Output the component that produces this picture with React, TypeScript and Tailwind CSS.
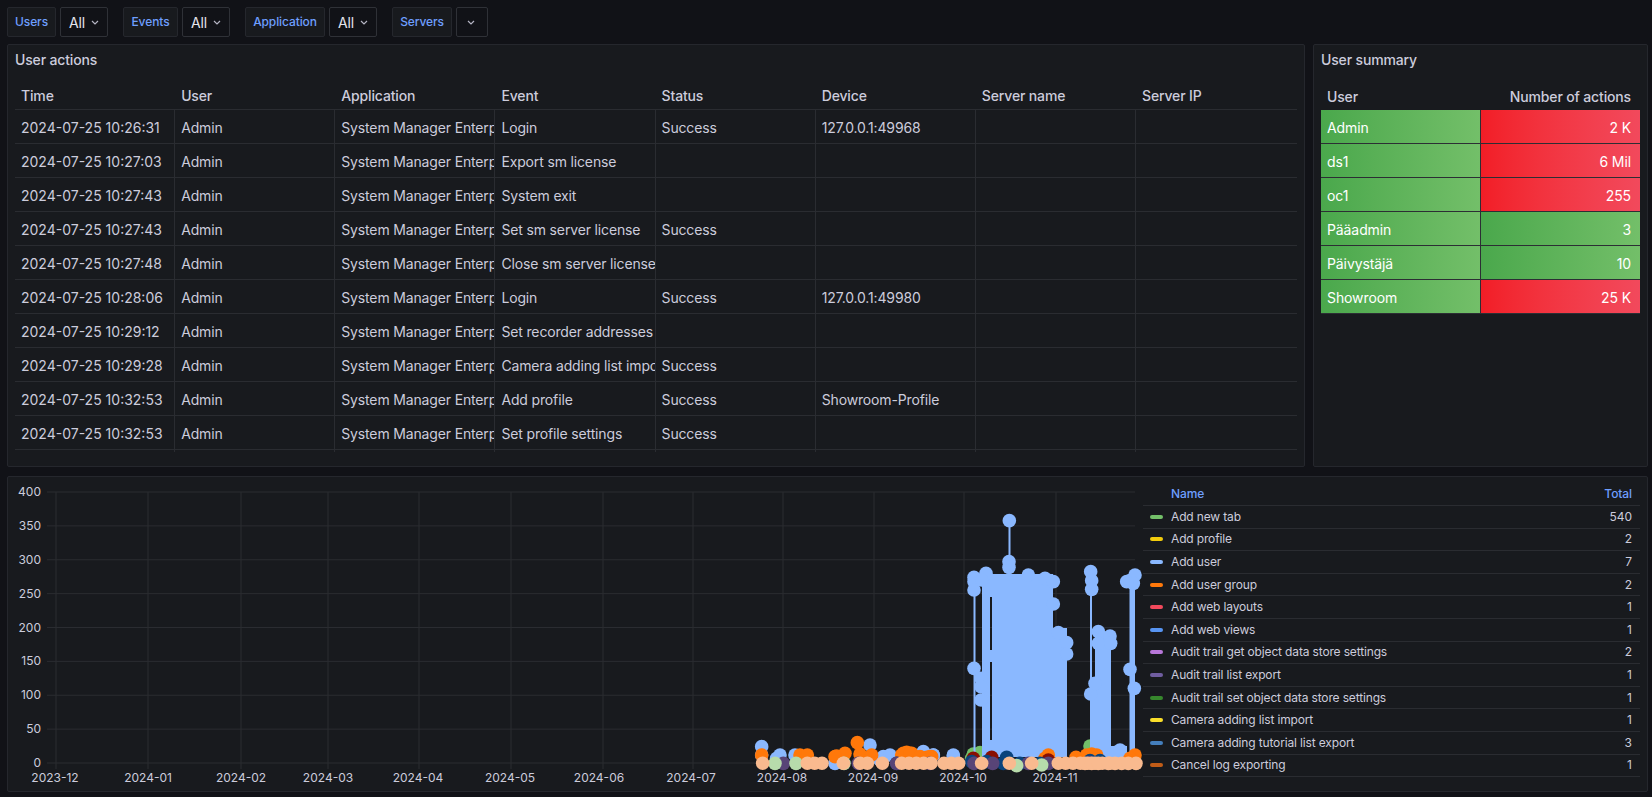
import React from "react";

const ROWS: string[][] = [
  ["2024-07-25 10:26:31", "Login", "Success", "127.0.0.1:49968"],
  ["2024-07-25 10:27:03", "Export sm license", "", ""],
  ["2024-07-25 10:27:43", "System exit", "", ""],
  ["2024-07-25 10:27:43", "Set sm server license", "Success", ""],
  ["2024-07-25 10:27:48", "Close sm server license", "", ""],
  ["2024-07-25 10:28:06", "Login", "Success", "127.0.0.1:49980"],
  ["2024-07-25 10:29:12", "Set recorder addresses", "", ""],
  ["2024-07-25 10:29:28", "Camera adding list import", "Success", ""],
  ["2024-07-25 10:32:53", "Add profile", "Success", "Showroom-Profile"],
  ["2024-07-25 10:32:53", "Set profile settings", "Success", ""],
];
const HEADERS = ["Time", "User", "Application", "Event", "Status", "Device", "Server name", "Server IP"];

const SUMMARY: [string, string, boolean][] = [
  ["Admin", "2 K", true],
  ["ds1", "6 Mil", true],
  ["oc1", "255", true],
  ["Pääadmin", "3", false],
  ["Päivystäjä", "10", false],
  ["Showroom", "25 K", true],
];

const LEGEND: [string, string, string][] = [
  ["Add new tab", "540", "#73BF69"],
  ["Add profile", "2", "#F2CC0C"],
  ["Add user", "7", "#8AB8FF"],
  ["Add user group", "2", "#FF780A"],
  ["Add web layouts", "1", "#F2495C"],
  ["Add web views", "1", "#5794F2"],
  ["Audit trail get object data store settings", "2", "#B877D9"],
  ["Audit trail list export", "1", "#705DA0"],
  ["Audit trail set object data store settings", "1", "#37872D"],
  ["Camera adding list import", "1", "#FADE2A"],
  ["Camera adding tutorial list export", "3", "#447EBC"],
  ["Cancel log exporting", "1", "#C15C17"],
];

const MONTHS: [string, number, number][] = [
  ["2023-12", 56, 55], ["2024-01", 148, 148], ["2024-02", 241, 241], ["2024-03", 328, 328], ["2024-04", 419, 418], ["2024-05", 511, 510],
  ["2024-06", 603, 599], ["2024-07", 693, 691], ["2024-08", 783, 782], ["2024-09", 874, 873], ["2024-10", 964, 963], ["2024-11", 1056, 1055],
];

// zoom-space helpers: points read from enlarged crops of the chart
const z4 = (p: number[][]) => p.map(([x, y]) => [900 + x / 3, 490 + y / 3]);
const z5 = (p: number[][]) => p.map(([x, y]) => [720 + x / 3, 700 + y / 3]);

const BLUE = [
  ...z4([[328,92],[327,215],[327,232],[222,262],[222,275],[222,300],[258,250],[245,270],[385,255],[435,265],[460,275],[460,342],[475,428],[500,458],[500,492],[222,535],[243,565],[243,590],[243,630],[572,245],[575,272],[575,298],[595,425],[595,460],[630,438],[632,460],[572,612],[585,580],[690,272],[705,255],[700,280],[680,275],[690,538],[703,595],[660,780],[640,790],[160,795],[100,795],[70,788]]),
  ...z5([[125,140],[125,165],[180,165],[170,175],[225,165],[345,190],[450,135],[490,170],[510,165],[480,180],[610,155],[640,165],[700,168],[600,170],[550,165],[360,175]]),
];
const ORANGE = [
  ...z5([[125,165],[240,165],[262,165],[350,168],[375,160],[345,170],[412,128],[420,162],[455,165],[560,157],[575,160],[545,165],[635,170],[620,172],[985,165],[975,175],[1068,172],[1100,165],[1130,165],[1115,162]]),
  ...z4([[10,790],[30,790],[90,800],[60,800],[705,795],[690,805]]),
];
const GREEN = [...z5([[760,162],[780,158],[1110,138]]), ...z4([[215,805]])];
const DARKRED = z5([[760,175],[815,172],[985,180]]);
const DARKBLUE = z5([[530,190],[860,172],[755,185],[800,185],[850,190],[960,190],[900,190],[1110,182],[1140,182]]);
const PURPLE = z5([[190,190],[630,190],[415,190],[762,190],[818,190],[985,190],[925,190],[530,190],[1110,188]]);
const LIGHTGREEN = z5([[165,190],[228,190],[890,197],[965,195],[372,190]]);

const CLUSTERS = [[128,128],[262,308],[370,372],[420,450],[487,487],[545,635],[672,725],[785,790],[868,872],[935,935],[1015,1185]];
const PEACH: number[][] = [];
CLUSTERS.forEach(([a, b]) => {
  for (let x = a; x <= b; x += 22) PEACH.push([720 + x / 3, 763.3]);
});
const PEACH2 = z4([[555,820],[575,820],[595,820],[625,820],[645,820],[665,820],[685,820],[708,820]]);

function Dots({ pts, color }: { pts: number[][]; color: string }) {
  return (
    <g fill={color}>
      {pts.map(([x, y], i) => (
        <circle key={i} cx={x} cy={y} r={6.8} />
      ))}
    </g>
  );
}

function Chart() {
  const yTicks = [400, 350, 300, 250, 200, 150, 100, 50, 0];
  const y = (v: number) => 763 - (v / 400) * 271;
  return (
    <svg width={1135} height={314} viewBox="8 477 1135 314" className="shrink-0 block">
      {yTicks.map((v) => (
        <g key={v}>
          <line x1={47} x2={1135} y1={y(v)} y2={y(v)} stroke="#2a2c31" />
          <text x={41} y={y(v) + 4} textAnchor="end" fontSize={12} fill="#ccccdc" fontFamily="Inter, sans-serif">{v}</text>
        </g>
      ))}
      {MONTHS.map(([m, x, tx]) => (
        <g key={m}>
          <line x1={x} x2={x} y1={492} y2={769} stroke="#2a2c31" />
          <text x={tx} y={782} textAnchor="middle" fontSize={12} fill="#ccccdc" fontFamily="Inter, sans-serif">{m}</text>
        </g>
      ))}
      <g fill="#73BF69"><rect x={989} y={740} width={4} height={18} /></g>
      <Dots pts={GREEN} color="#73BF69" />
      <g fill="#8AB8FF">
        <rect x={973.5} y={577} width={2} height={180} />
        <rect x={982} y={574} width={8} height={183} />
        <rect x={982} y={574} width={11} height={23} />
        <rect x={982} y={650} width={11} height={12} />
        <rect x={982} y={740} width={11} height={17} />
        <polygon points="992,574 1053,574 1053,628 1067,628 1067,757 992,757" />
        <rect x={1008.5} y={520} width={2} height={55} />
        <rect x={1090} y={571} width={2} height={180} />
        <rect x={1095} y={632} width={16} height={118} />
        <rect x={1092} y={680} width={4} height={70} />
        <rect x={1095} y={746} width={32} height={12} />
        <rect x={1129.5} y={580} width={5.5} height={178} />
      </g>
      <Dots pts={BLUE} color="#8AB8FF" />
      <Dots pts={ORANGE} color="#FF780A" />
      <Dots pts={DARKRED} color="#890F02" />
      <Dots pts={DARKBLUE} color="#0A437C" />
      <Dots pts={PURPLE} color="#584477" />
      <Dots pts={LIGHTGREEN} color="#B7DBAB" />
      <Dots pts={PEACH} color="#F9BA8F" />
      <Dots pts={PEACH2} color="#F9BA8F" />
    </svg>
  );
}

function VarLabel({ text, w }: { text: string; w: string }) {
  return (
    <div className={`${w} h-[30px] flex items-center justify-center rounded-[2px] border border-[#25272d] bg-[#181a1e] text-[12px] font-medium tracking-[-0.1px] text-[#6e9fff]`}>
      {text}
    </div>
  );
}

function VarValue({ text, w }: { text: string; w: string }) {
  return (
    <div className={`${w} h-[30px] flex items-center gap-[6px] pl-[8px] rounded-[2px] border border-[#2f3137] bg-[#111217] text-[14px] tracking-[-0.1px] text-[#e4e4ee]`}>
      {text && <span>{text}</span>}
      <svg width="8" height="5" viewBox="0 0 8 5" fill="none" stroke="#b5b5c4" strokeWidth="1.2" className={text ? "" : "ml-[2px]"}><path d="M1 1l3 3 3-3" /></svg>
    </div>
  );
}

function Panel({ className, children }: { className: string; children: React.ReactNode }) {
  return <div className={`${className} rounded-[2px] border border-[#25272d] bg-[#181a1e]`}>{children}</div>;
}

export default function App() {
  return (
    <div className="w-[1652px] h-[797px] overflow-hidden bg-[#111217] pl-[7px] pt-[7px] text-[#ccccdc] font-['Inter',sans-serif]">
      <div className="flex h-[30px] items-start">
        <VarLabel text="Users" w="w-[49px]" />
        <div className="ml-[4px]"><VarValue text="All" w="w-[48px]" /></div>
        <div className="ml-[15px]"><VarLabel text="Events" w="w-[55px]" /></div>
        <div className="ml-[4px]"><VarValue text="All" w="w-[48px]" /></div>
        <div className="ml-[15px]"><VarLabel text="Application" w="w-[80px]" /></div>
        <div className="ml-[4px]"><VarValue text="All" w="w-[48px]" /></div>
        <div className="ml-[15px]"><VarLabel text="Servers" w="w-[60px]" /></div>
        <div className="ml-[4px]"><VarValue text="" w="w-[32px]" /></div>
      </div>

      <div className="mt-[7px] flex gap-[8px]">
        <Panel className="w-[1298px] h-[423px] px-[7px] overflow-hidden">
          <div className="h-[29px] flex items-center text-[14px] font-medium tracking-[-0.15px]">User actions</div>
          <div className="h-[36px] pt-[8px] flex items-center border-b border-[#2a2c31] text-[14px] font-medium tracking-[-0.15px] overflow-hidden">
            {HEADERS.map((h) => (
              <div key={h} className="w-[160.15px] shrink-0 pl-[6px]">{h}</div>
            ))}
          </div>
          {ROWS.map((r, i) => {
            const cells = [r[0], "Admin", "System Manager Enterprise", r[1], r[2], r[3], "", ""];
            return (
              <div key={i} className="h-[34px] flex border-b border-[#2a2c31] text-[14px] overflow-hidden">
                {cells.map((c, j) => (
                  <div key={j} className={`w-[160.15px] shrink-0 overflow-hidden whitespace-nowrap pl-[6px] leading-[35px] ${j > 0 ? "tracking-[-0.15px]" : ""} ${j < 7 ? "border-r border-[#2a2c31]" : ""}`}>
                    {c}
                  </div>
                ))}
              </div>
            );
          })}
          <div className="h-[2px] flex">
            {HEADERS.slice(0, 7).map((h) => (
              <div key={h} className="w-[160.15px] shrink-0 border-r border-[#2a2c31]" />
            ))}
          </div>
        </Panel>

        <Panel className="w-[335px] h-[423px] px-[7px]">
          <div className="h-[29px] flex items-center text-[14px] font-medium tracking-[-0.15px]">User summary</div>
          <div className="h-[36px] pt-[8px] flex items-center justify-between pl-[6px] pr-[9px] text-[14px] font-medium tracking-[-0.15px]">
            <span>User</span>
            <span>Number of actions</span>
          </div>
          {SUMMARY.map(([u, n, red]) => (
            <div key={u} className="h-[34px] flex border-b border-[#2c2e34] text-[14px] tracking-[-0.1px] text-white">
              <div className="w-[160px] flex items-center pl-[6px] pt-[1px] border-r border-[#2c2e34] bg-gradient-to-r from-[#4aa84c] to-[#73bf69]">{u}</div>
              <div className={`flex-1 flex items-center justify-end pr-[9px] pt-[1px] bg-gradient-to-r ${red ? "from-[#f21d26] to-[#f2495c]" : "from-[#4aa84c] to-[#73bf69]"}`}>{n}</div>
            </div>
          ))}
        </Panel>
      </div>

      <Panel className="mt-[9px] w-[1641px] h-[316px] flex">
        <Chart />
        <div className="w-[497px] shrink-0">
          <div className="h-[29px] pt-[5px] flex items-center justify-between border-b border-[#2a2c31] pl-[28px] pr-[8px] text-[12px] font-medium tracking-[-0.1px] text-[#6e9fff]">
            <span>Name</span>
            <span>Total</span>
          </div>
          {LEGEND.map(([name, total, color]) => (
            <div key={name} className="h-[22.6px] flex items-center border-b border-[#2a2c31] pr-[8px] text-[12px]">
              <i className="ml-[7px] mr-[8px] block h-[4px] w-[13px] rounded-[2px]" style={{ backgroundColor: color }} />
              <span className="flex-1 whitespace-nowrap tracking-[-0.15px]">{name}</span>
              <span>{total}</span>
            </div>
          ))}
        </div>
      </Panel>
    </div>
  );
}
